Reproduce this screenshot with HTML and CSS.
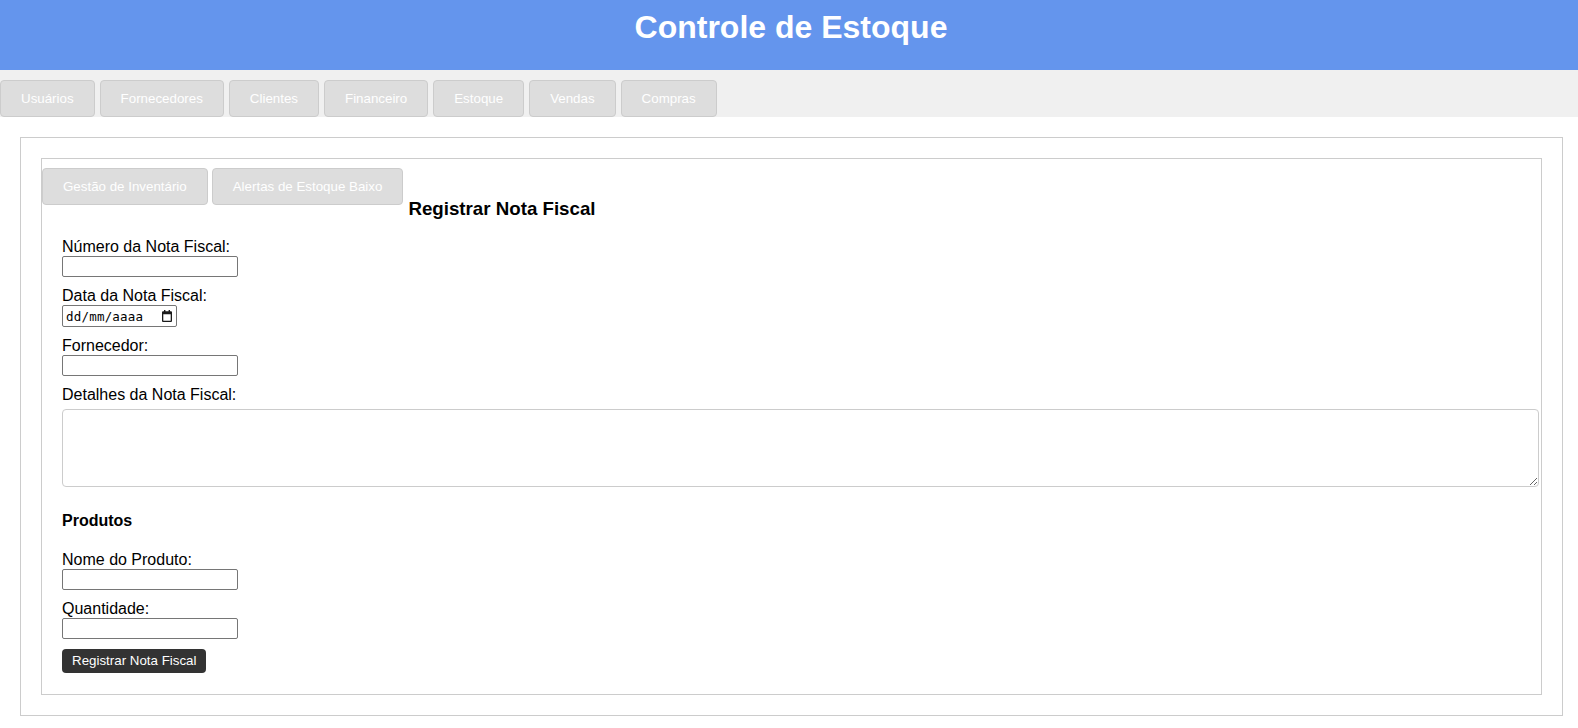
FILE: index.html
```html
<!DOCTYPE html>
<html lang="pt-BR">
<head>
<meta charset="utf-8">
<title>Controle de Estoque</title>
<link rel="stylesheet" href="styles.css">
</head>
<body>
<header class="topbar">
  <h1 class="title">Controle de Estoque</h1>
</header>
<nav class="mainnav">
  <button class="navbtn">Usuários</button>
  <button class="navbtn">Fornecedores</button>
  <button class="navbtn">Clientes</button>
  <button class="navbtn">Financeiro</button>
  <button class="navbtn">Estoque</button>
  <button class="navbtn">Vendas</button>
  <button class="navbtn">Compras</button>
</nav>
<main class="container">
  <section class="panel">
    <div class="tabrow">
      <button class="navbtn">Gestão de Inventário</button>
      <button class="navbtn">Alertas de Estoque Baixo</button>
      <h3 class="formtitle">Registrar Nota Fiscal</h3>
    </div>
    <form class="nfform">
      <div class="group">
        <label class="lbl" for="num">Número da Nota Fiscal:</label>
        <input class="txt" id="num" type="text">
      </div>
      <div class="group">
        <label class="lbl">Data da Nota Fiscal:</label>
        <div class="datebox">
          <span class="datetext">dd/mm/aaaa</span>
          <svg class="calicon" width="10" height="12" viewBox="0 0 10 12"><path fill="#1a1a1a" fill-rule="evenodd" d="M2 0h1.4v1.2h3.2V0H8v1.2h1a1 1 0 0 1 1 1V11a1 1 0 0 1-1 1H1a1 1 0 0 1-1-1V2.2a1 1 0 0 1 1-1h1z M1.3 4.2v6.5h7.4V4.2z"/></svg>
        </div>
      </div>
      <div class="group">
        <label class="lbl" for="forn">Fornecedor:</label>
        <input class="txt" id="forn" type="text">
      </div>
      <div class="group">
        <label class="lbl" for="det">Detalhes da Nota Fiscal:</label>
        <textarea class="area" id="det"></textarea>
      </div>
      <h4 class="subtitle">Produtos</h4>
      <div class="group">
        <label class="lbl" for="prod">Nome do Produto:</label>
        <input class="txt" id="prod" type="text">
      </div>
      <div class="group">
        <label class="lbl" for="qtd">Quantidade:</label>
        <input class="txt" id="qtd" type="text">
      </div>
      <button type="button" class="submit">Registrar Nota Fiscal</button>
    </form>
  </section>
</main>
</body>
</html>
```
FILE: styles.css
```css
* { box-sizing: border-box; }
html, body { margin: 0; padding: 0; background: #fff; }
body {
  font-family: "Liberation Sans", Arial, sans-serif;
  font-size: 16px;
  color: #000;
}
.topbar {
  background: #6495ed;
  height: 70px;
  padding-top: 9px;
  padding-left: 4px;
  text-align: center;
}
.title {
  margin: 0;
  color: #fff;
  font-size: 32px;
  font-weight: bold;
  line-height: 37px;
}
.mainnav {
  background: #f0f0f0;
  height: 47px;
  padding-top: 10px;
  display: flex;
  gap: 5px;
}
.navbtn {
  font-family: "Liberation Sans", Arial, sans-serif;
  font-size: 13.333px;
  line-height: 15px;
  height: 37px;
  padding: 10px 20px;
  background: #ddd;
  border: 1px solid #ccc;
  border-radius: 4px;
  color: #fff;
  margin: 0;
}
.container {
  margin: 20px 0 0 20px;
  width: 1543px;
  border: 1px solid #ccc;
  padding: 20px;
}
.panel {
  border: 1px solid #ccc;
  padding-top: 9px;
}
.tabrow {
  display: flex;
  align-items: flex-start;
  gap: 4px;
}
.formtitle {
  margin: 30px 0 0 0;
  padding-left: 1px;
  font-size: 18.72px;
  line-height: 21.5px;
  font-weight: bold;
}
.nfform {
  padding: 0 20px 21px 20px;
  margin-top: 18.5px;
}
.group { margin-bottom: 10px; }
.lbl {
  display: block;
  line-height: 18px;
  height: 18px;
}
.txt {
  display: block;
  width: 176px;
  height: 21px;
  border: 1px solid #767676;
  border-radius: 2px;
  padding: 1px 2px;
  font-family: "Liberation Sans", Arial, sans-serif;
  font-size: 13.333px;
  margin: 0;
}
.datebox {
  width: 115px;
  height: 22px;
  border: 1px solid #767676;
  border-radius: 2px;
  display: flex;
  align-items: center;
  justify-content: space-between;
  padding: 0 4px 0 3px;
}
.datetext {
  font-family: "DejaVu Sans Mono", "Liberation Mono", monospace;
  font-size: 12.5px;
  color: #000;
  letter-spacing: 0.2px;
}
.calicon { display: block; }
.area {
  display: block;
  width: calc(100% + 18px);
  height: 78px;
  margin-top: 5px;
  padding: 8px;
  border: 1px solid #ccc;
  border-radius: 4px;
  resize: vertical;
  font-family: "Liberation Sans", Arial, sans-serif;
}
.subtitle {
  margin: 24.5px 0 21px 0;
  font-size: 16px;
  line-height: 18px;
  font-weight: bold;
}
.submit {
  display: block;
  margin-top: 10px;
  background: #333;
  color: #fff;
  border: none;
  border-radius: 4px;
  padding: 4px 10px;
  height: 24px;
  line-height: 16px;
  font-family: "Liberation Sans", Arial, sans-serif;
  font-size: 13.333px;
}
```
